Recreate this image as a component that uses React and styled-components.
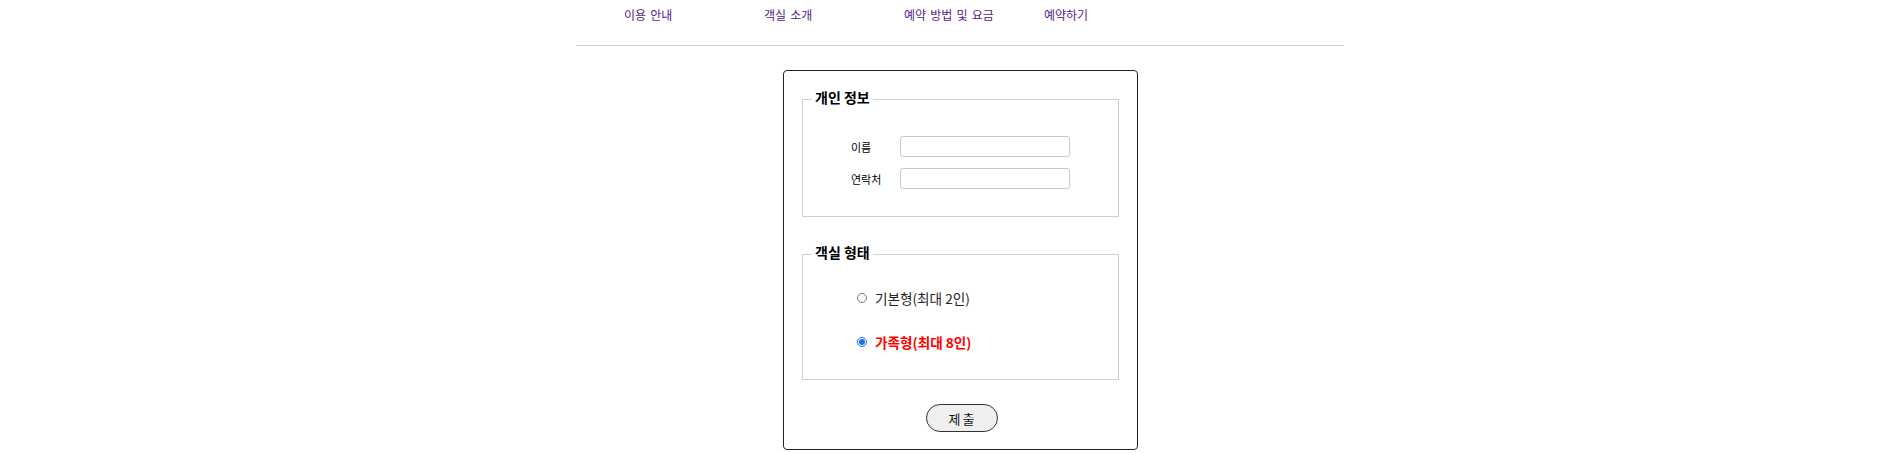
import React from "react";
import styled, { createGlobalStyle } from "styled-components";

const Global = createGlobalStyle`
  html, body { margin: 0; padding: 0; background: #fff; }
  body { font-family: "Noto Sans CJK KR", "Noto Sans", sans-serif; color: #000; }
`;

const Page = styled.div`
  width: 768px;
  margin-left: 576px;
`;

const Nav = styled.ul`
  list-style: none;
  margin: 0;
  padding: 6px 0 0 48px;
  height: 46px;
  display: flex;
  box-sizing: border-box;
  border-bottom: 1px solid #cfcfcf;
`;

const NavItem = styled.li`
  width: 140px;
  font-size: 12px;
  word-spacing: 1.5px;
  line-height: 18px;
  a { color: #551a8b; text-decoration: none; }
`;

const FormBox = styled.form`
  width: 355px;
  box-sizing: border-box;
  margin: 24px 0 0 207px;
  border: 1px solid #222;
  border-radius: 4px;
  padding: 17px 18px 17px 18px;
  display: flex;
  flex-direction: column;
  align-items: stretch;
`;

const Fieldset = styled.fieldset`
  margin: 0 0 ${(p) => p.$mb}px 0;
  border: 1px solid #cfcfcf;
  padding: 0;
  height: ${(p) => p.$h}px;
  box-sizing: border-box;
  min-width: 0;
`;

const Legend = styled.legend`
  margin-left: 9px;
  padding: 0 3px 4px 3px;
  font-size: 14px;
  font-weight: bold;
  line-height: 18px;
`;

const InfoGrid = styled.div`
  display: grid;
  grid-template-columns: 49px 170px;
  row-gap: 11px;
  align-items: center;
  margin: 26px 0 0 48px;
`;

const Label = styled.label`
  font-size: 11px;
`;

const TextInput = styled.input`
  height: 21px;
  box-sizing: border-box;
  border: 1px solid #c8c8c8;
  border-radius: 3px;
  padding: 0 4px;
  margin: 0;
`;

const RadioList = styled.div`
  display: flex;
  flex-direction: column;
  gap: 26px;
  margin: 24px 0 0 54px;
`;

const RadioRow = styled.label`
  display: flex;
  align-items: center;
  gap: 8px;
  height: 18px;
  font-size: 13.6px;
  color: ${(p) => (p.$active ? "#ff0000" : "#222")};
  font-weight: ${(p) => (p.$active ? "bold" : "normal")};
`;

const Radio = styled.input`
  width: 10px;
  height: 10px;
  margin: 0;
  accent-color: #1a73e8;
`;

const SubmitRow = styled.div`
  display: flex;
  justify-content: center;
  padding-left: 2px;
`;

const SubmitButton = styled.button`
  width: 72px;
  height: 28px;
  border: 1px solid #333;
  border-radius: 14px;
  background: #efefef;
  font-family: "Noto Sans CJK KR", sans-serif;
  font-size: 13px;
  letter-spacing: 2px;
  text-indent: 2px;
  color: #111;
  padding: 0;
`;

export default function App() {
  return (
    <>
      <Global />
      <Page>
        <Nav>
          <NavItem><a href="#guide">이용 안내</a></NavItem>
          <NavItem><a href="#rooms">객실 소개</a></NavItem>
          <NavItem><a href="#price">예약 방법 및 요금</a></NavItem>
          <NavItem><a href="#reserve">예약하기</a></NavItem>
        </Nav>
        <FormBox onSubmit={(e) => e.preventDefault()}>
          <Fieldset $h={129} $mb={26}>
            <Legend>개인 정보</Legend>
            <InfoGrid>
              <Label htmlFor="name">이름</Label>
              <TextInput id="name" type="text" />
              <Label htmlFor="tel">연락처</Label>
              <TextInput id="tel" type="text" />
            </InfoGrid>
          </Fieldset>
          <Fieldset $h={137} $mb={24}>
            <Legend>객실 형태</Legend>
            <RadioList>
              <RadioRow>
                <Radio type="radio" name="room" value="basic" />
                기본형(최대 2인)
              </RadioRow>
              <RadioRow $active>
                <Radio type="radio" name="room" value="family" defaultChecked />
                가족형(최대 8인)
              </RadioRow>
            </RadioList>
          </Fieldset>
          <SubmitRow>
            <SubmitButton type="submit">제출</SubmitButton>
          </SubmitRow>
        </FormBox>
      </Page>
    </>
  );
}
